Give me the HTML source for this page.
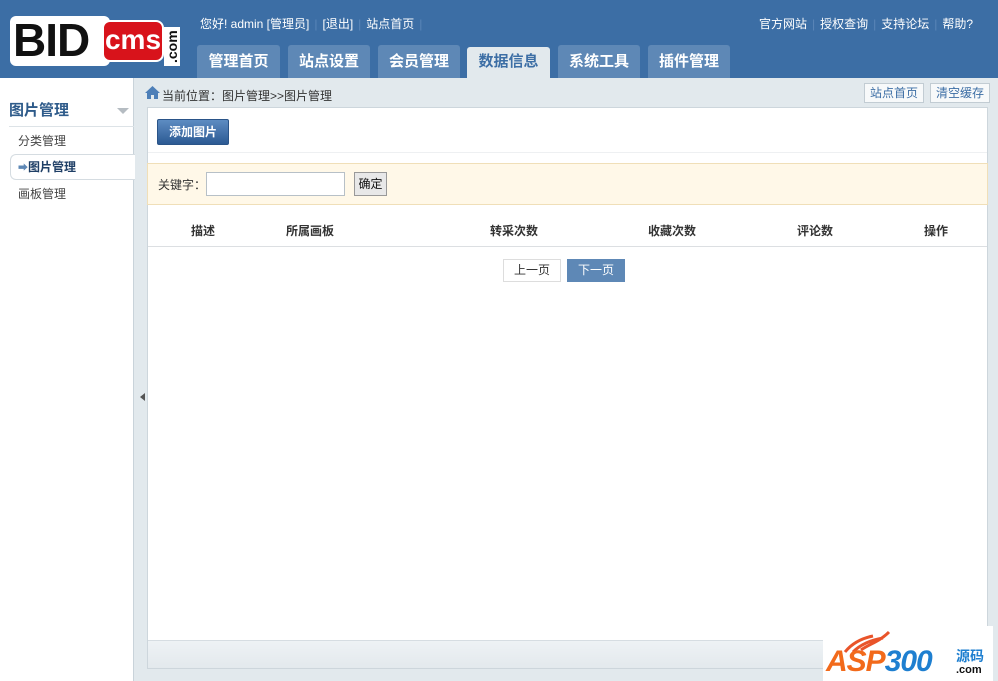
<!DOCTYPE html>
<html><head><meta charset="utf-8"><style>
*{margin:0;padding:0;box-sizing:border-box}
body{width:998px;height:681px;overflow:hidden;background:#e2e9ed;font-family:"Liberation Sans","Noto Sans CJK SC",sans-serif;font-size:12px;color:#333;position:relative}
.a{position:absolute}
#hd{left:0;top:0;width:998px;height:78px;background:#3c6ea5}
.tab{top:45px;height:33px;background:#5e88b6;color:#fff;font-weight:bold;font-size:15px;text-align:center;line-height:33px;border-radius:3px 3px 0 0}
.tab.on{background:#e2e9ed;color:#3c6ea5;top:47px;height:31px;line-height:29px}
.top{color:#fff;font-size:12px;top:15px}
.top span{color:#5a86b8;margin:0 5px}
#side{left:0;top:78px;width:134px;height:603px;background:#fff;border-right:1px solid #c9d3da}
#main{left:147px;top:107px;width:841px;height:562px;background:#fff;border:1px solid #cdd6dc}
.btn2{top:83px;height:20px;border:1px solid #c2ccd3;background:#f7f9fa;color:#3c6ea5;line-height:18px;padding:0 5px;font-size:12px}
</style></head><body>
<div id="hd" class="a"></div>
<div class="a" style="left:10px;top:14px;width:170px;height:54px">
 <div class="a" style="left:0;top:2px;width:100px;height:50px;background:#fff;border-radius:6px"></div>
 <div class="a" style="left:3px;top:1px;font:bold 46px/50px 'Liberation Sans',sans-serif;color:#111;letter-spacing:-1px">BID</div>
 <div class="a" style="left:92px;top:6px;width:62px;height:42px;background:#d8131b;border:2px solid #fff;border-radius:8px;color:#fff;font:bold 28px/36px 'Liberation Sans',sans-serif;text-align:center">cms</div>
 <div class="a" style="left:154px;top:52px;color:#111;background:#fff;font:bold 14px/16px 'Liberation Sans',sans-serif;transform:rotate(-90deg);transform-origin:left top;padding:0 3px">.com</div>
</div>
<div class="a top" style="left:200px">您好! admin [管理员]<span>|</span>[退出]<span>|</span>站点首页<span>|</span></div>
<div class="a top" style="left:759px">官方网站<span>|</span>授权查询<span>|</span>支持论坛<span>|</span>帮助?</div>
<div class="a tab" style="left:197px;width:83px">管理首页</div>
<div class="a tab" style="left:288px;width:82px">站点设置</div>
<div class="a tab" style="left:378px;width:82px">会员管理</div>
<div class="a tab on" style="left:467px;width:83px">数据信息</div>
<div class="a tab" style="left:558px;width:82px">系统工具</div>
<div class="a tab" style="left:648px;width:82px">插件管理</div>

<div id="side" class="a">
 <div class="a" style="left:9px;top:21px;font-weight:bold;font-size:15px;color:#2e5b8a">图片管理</div>
 <div class="a" style="left:117px;top:30px;width:0;height:0;border:6px solid transparent;border-top:6px solid #b5bcc2"></div>
 <div class="a" style="left:9px;top:48px;width:125px;border-top:1px solid #dde3e7"></div>
 <div class="a" style="left:18px;top:54px;color:#444">分类管理</div>
 <div class="a" style="left:10px;top:76px;width:125px;height:26px;border:1px solid #d5dce1;border-right:none;border-radius:6px 0 0 6px;background:#fff"></div>
 <div class="a" style="left:18px;top:80px;font-weight:bold;color:#1f3f66"><span style="color:#5e88b6;font-size:10px">➡</span>图片管理</div>
 <div class="a" style="left:18px;top:107px;color:#444">画板管理</div>
</div>
<div class="a" style="left:140px;top:393px;width:0;height:0;border:4px solid transparent;border-right:5px solid #555;border-left:0"></div>

<svg class="a" style="left:145px;top:86px" width="15" height="13" viewBox="0 0 15 13"><path d="M7.5 0L0 7h2v6h4V9h3v4h4V7h2z" fill="#4d7fb8"/></svg>
<div class="a" style="left:162px;top:87px;color:#333">当前位置：图片管理&gt;&gt;图片管理</div>
<div class="a btn2" style="left:864px">站点首页</div>
<div class="a btn2" style="left:930px">清空缓存</div>

<div id="main" class="a">
 <div class="a" style="left:9px;top:11px;width:72px;height:26px;background:linear-gradient(#5d8cc2,#2c5a93);border:1px solid #2a5488;border-radius:2px;color:#fff;font-weight:bold;text-align:center;line-height:24px">添加图片</div>
 <div class="a" style="left:0;top:44px;width:839px;border-top:1px solid #eef0f2"></div>
 <div class="a" style="left:-1px;top:55px;width:841px;height:42px;background:#fff8e8;border:1px solid #f0dfb8"></div>
 <div class="a" style="left:10px;top:68px;color:#333">关键字：</div>
 <div class="a" style="left:58px;top:64px;width:139px;height:24px;border:1px solid #b7c0c7;background:#fff"></div>
 <div class="a" style="left:206px;top:64px;width:33px;height:24px;border:1px solid #999;background:#e8e8e8;text-align:center;line-height:22px;color:#111">确定</div>
 <div class="a" style="left:0;top:138px;width:839px;border-top:1px solid #dcdfe2"></div>
 <div class="a" style="left:43px;top:114px;font-weight:bold;color:#333">描述</div>
 <div class="a" style="left:138px;top:114px;font-weight:bold;color:#333">所属画板</div>
 <div class="a" style="left:342px;top:114px;font-weight:bold;color:#333">转采次数</div>
 <div class="a" style="left:500px;top:114px;font-weight:bold;color:#333">收藏次数</div>
 <div class="a" style="left:649px;top:114px;font-weight:bold;color:#333">评论数</div>
 <div class="a" style="left:776px;top:114px;font-weight:bold;color:#333">操作</div>
 <div class="a" style="left:355px;top:151px;width:58px;height:23px;border:1px solid #ddd;text-align:center;line-height:21px;color:#333">上一页</div>
 <div class="a" style="left:419px;top:151px;width:58px;height:23px;background:#5e88b6;text-align:center;line-height:23px;color:#fff">下一页</div>
 <div class="a" style="left:0;top:532px;width:839px;height:28px;background:linear-gradient(#eef2f5,#e3e9ed);border-top:1px solid #d6dde2"></div>
</div>

<div class="a" style="left:823px;top:626px;width:170px;height:55px;background:#fff">
 <svg class="a" style="left:20px;top:2px" width="50" height="26" viewBox="0 0 50 26"><path d="M2 24C10 14 20 10 30 8M10 24C18 16 28 12 40 10M18 22C26 16 36 14 46 4" stroke="#e9542a" stroke-width="3" fill="none"/></svg>
 <div class="a" style="left:3px;top:20px;font:italic bold 30px/32px 'Liberation Sans',sans-serif;color:#f26a1b;letter-spacing:-1px">ASP<span style="color:#1e7fd0">300</span></div>
 <div class="a" style="left:133px;top:22px;font:bold 14px/16px 'Noto Sans CJK SC',sans-serif;color:#1e7fd0">源码</div>
 <div class="a" style="left:133px;top:38px;font:bold 11px/12px 'Liberation Sans',sans-serif;color:#111">.com</div>
</div>
</body></html>
